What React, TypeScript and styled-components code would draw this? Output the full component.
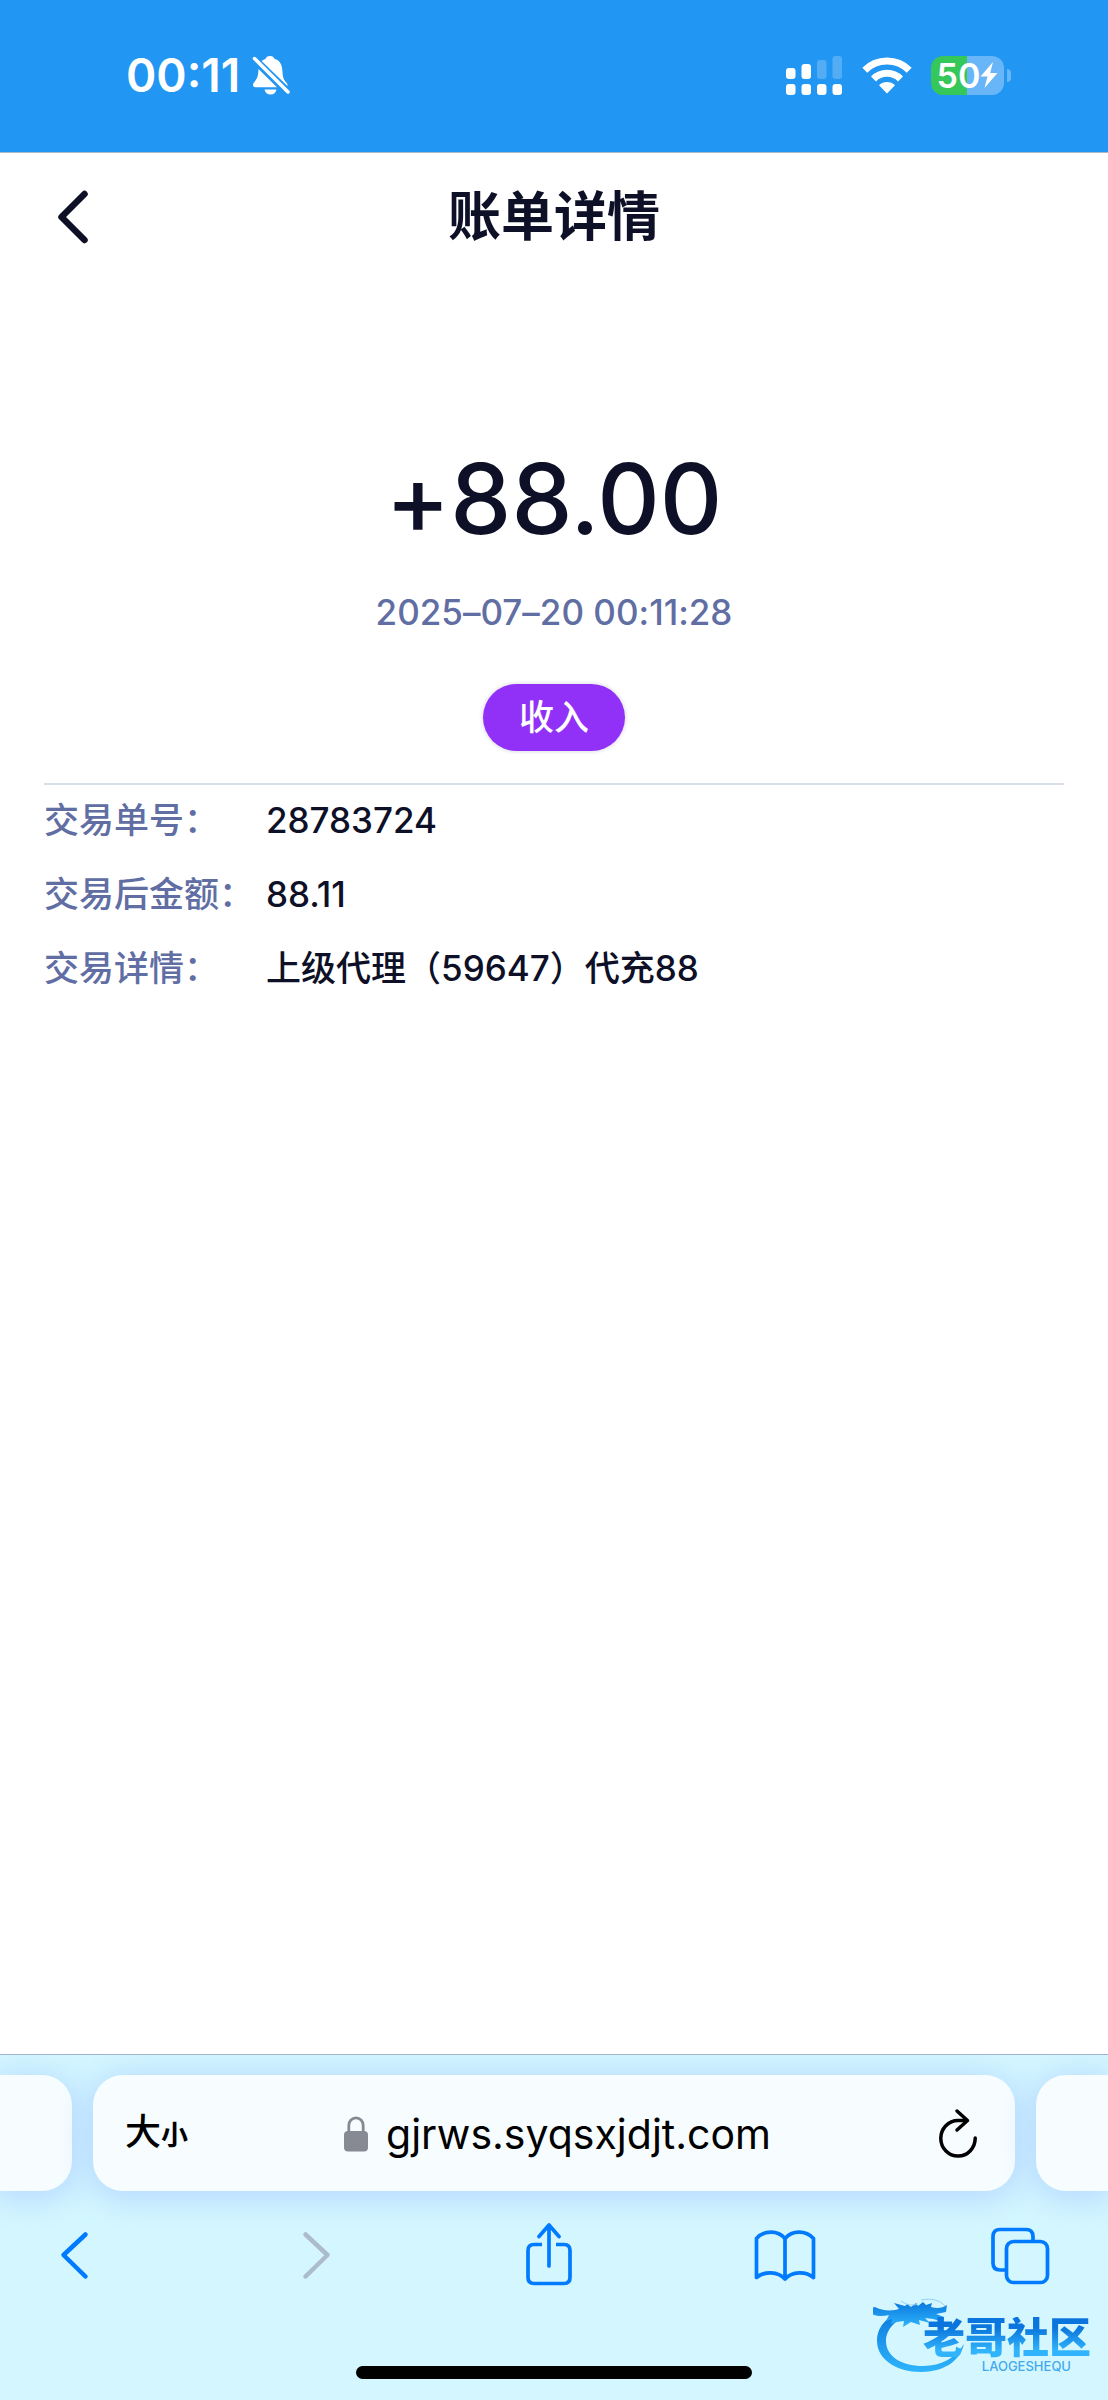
import React from "react";
import styled, { createGlobalStyle } from "styled-components";

const GlobalStyle = createGlobalStyle`
  *, *::before, *::after { box-sizing: border-box; }
  body {
    margin: 0;
    background: #ffffff;
    color: #0d1027;
    font-family: Inter, "Noto Sans CJK SC", sans-serif;
  }
  button {
    padding: 0;
    border: 0;
    background: none;
    color: inherit;
    font: inherit;
    cursor: pointer;
  }
  svg { display: block; }
`;

const Page = styled.div`
  position: relative;
  display: flex;
  flex-direction: column;
  min-height: 100vh;
`;

const StatusBar = styled.div`
  display: flex;
  align-items: center;
  justify-content: space-between;
  height: 153px;
  padding: 0 97px 2px 126px;
  border-bottom: 1px solid #a9b9c9;
  background: #2296f3;
  color: #ffffff;
`;

const StatusGroup = styled.div<{ $gap: number }>`
  display: flex;
  align-items: center;
  gap: ${(p) => p.$gap}px;
`;

const Clock = styled.time`
  font-size: 46px;
  font-weight: 600;
  line-height: 56px;
`;

const Battery = styled.div`
  display: flex;
  align-items: center;
  gap: 3px;
`;

const BatteryBody = styled.div`
  display: flex;
  align-items: center;
  justify-content: center;
  width: 73px;
  height: 39px;
  border-radius: 12px;
  background: linear-gradient(90deg, #35c759 50%, #68b6f7 50%);
  font-size: 34px;
  font-weight: 600;
  line-height: 39px;
`;

const BatteryTip = styled.span`
  width: 4px;
  height: 13px;
  border-radius: 0 6px 6px 0;
  background: #68b6f7;
`;

const Header = styled.header`
  display: grid;
  grid-template-columns: 1fr auto 1fr;
  align-items: center;
  height: 128px;
  padding: 0 44px;
`;

const BackButton = styled.button`
  justify-self: start;
  display: flex;
  align-items: center;
  justify-content: center;
  width: 58px;
  height: 80px;
`;

const Title = styled.h1`
  margin: 0;
  font-size: 53px;
  font-weight: 700;
  line-height: 64px;
`;

const Content = styled.main`
  flex: 1;
  padding: 168px 44px 48px;
  font-feature-settings: "calt" 0;
`;

const Summary = styled.section`
  display: flex;
  flex-direction: column;
  align-items: center;
  padding-bottom: 32px;
  border-bottom: 2px solid #d9dfea;
`;

const Amount = styled.p`
  margin: 0 0 39px;
  font-size: 97px;
  font-weight: 500;
  line-height: 100px;
`;

const Timestamp = styled.time`
  margin-bottom: 48px;
  color: #616ea3;
  font-size: 35px;
  font-weight: 500;
  line-height: 48px;
`;

const Badge = styled.span`
  height: 67px;
  padding: 0 36px;
  border-radius: 34px;
  background: #9131f7;
  box-shadow: 0 0 3px 2px #e9ebf0;
  color: #ffffff;
  font-size: 35px;
  font-weight: 500;
  line-height: 66px;
`;

const Details = styled.dl`
  display: grid;
  grid-template-columns: 222px 1fr;
  row-gap: 26px;
  margin: 11px 0 0;
  font-size: 35px;
  font-weight: 500;
  line-height: 48px;
`;

const Label = styled.dt`
  color: #616ea3;
  white-space: nowrap;
`;

const Value = styled.dd`
  margin: 0;
`;

const BrowserBar = styled.footer`
  display: flex;
  flex-direction: column;
  padding: 20px 0 21px;
  border-top: 1px solid #9fb4c8;
  background: #d4f7ff;
  overflow: hidden;
`;

const TabStrip = styled.div`
  display: flex;
  gap: 21px;
  height: 116px;
`;

const TabCard = styled.div`
  background: #f7fdff;
  box-shadow: 0 4px 32px 4px rgba(165, 200, 255, 0.65);
`;

const PreviousTab = styled(TabCard)`
  width: 72px;
  border-radius: 0 30px 30px 0;
`;

const NextTab = styled(TabCard)`
  width: 72px;
  border-radius: 30px 0 0 30px;
`;

const CurrentTab = styled(TabCard)`
  flex: 1;
  display: grid;
  grid-template-columns: 1fr auto 1fr;
  align-items: center;
  padding: 2px 38px 0 32px;
  border-radius: 30px;
  color: #000000;
`;

const TextSizeButton = styled.button`
  justify-self: start;
  font-size: 36px;
  font-weight: 500;
  line-height: 48px;

  small {
    font-size: 27px;
    font-weight: 700;
  }
`;

const AddressButton = styled.button`
  display: flex;
  align-items: center;
  gap: 18px;
  padding-left: 13px;
  font-size: 41px;
  line-height: 48px;
`;

const ReloadButton = styled.button`
  justify-self: end;
`;

const Toolbar = styled.nav`
  display: flex;
  justify-content: space-between;
  margin: 32px 58px 79px 44px;
`;

const ToolButton = styled.button`
  width: 60px;
  height: 64px;
  color: #007aff;

  &:disabled {
    color: #adbccd;
  }
`;

const HomeIndicator = styled.div`
  align-self: center;
  width: 396px;
  height: 13px;
  border-radius: 7px;
  background: #000000;
`;

const Watermark = styled.div`
  position: absolute;
  right: 17px;
  bottom: 25px;
  display: flex;
  align-items: flex-end;
  pointer-events: none;
`;

const WatermarkText = styled.div`
  display: flex;
  flex-direction: column;
  align-items: flex-end;
  margin: 0 0 2px -44px;
`;

const WatermarkName = styled.span`
  background: linear-gradient(180deg, #0a75dc 25%, #31b4fb 80%);
  background-clip: text;
  -webkit-background-clip: text;
  color: transparent;
  font-size: 42px;
  font-weight: 900;
  line-height: 42px;
`;

const WatermarkLatin = styled.span`
  margin-right: 20px;
  color: #42a9ee;
  font-size: 13px;
  font-weight: 500;
  line-height: 14px;
`;

const stroke = {
  fill: "none",
  stroke: "currentColor",
  strokeLinecap: "round" as const,
  strokeLinejoin: "round" as const,
};

const MutedBellIcon = () => (
  <svg width="38" height="40" viewBox="0 0 38 40" fill="#ffffff" aria-label="静音">
    <path d="M18 1c-2.500 0-4 1.300-4.500 3-2 .6-3.600 1.600-4.800 3L34 32c1.600-.3 2-2 1-3.400-2.800-3.500-4.300-5.500-4.500-11.600C30.200 9.500 28 5.300 22.600 4 22 2.200 20.500 1 18 1z" />
    <path d="M6.500 14c-.3 8-1.500 10-4.500 13.600-2 2.300-1 4.600 1.400 4.600H25z" />
    <path d="M12.500 34.500h12c-.5 3-2.900 5-6 5s-5.500-2-6-5z" />
    <path d="M2 3.500l34 33" stroke="#2296f3" strokeWidth="7" />
    <path d="M2.500 3.500l33.500 33.500" stroke="#ffffff" strokeWidth="3.500" strokeLinecap="round" />
  </svg>
);

const SignalIcon = () => (
  <svg width="57" height="39" viewBox="0 0 57 39" fill="#ffffff" aria-label="信号">
    <rect x="0" y="12" width="9.500" height="11" rx="3" />
    <rect x="15.500" y="8" width="9.500" height="15" rx="3" />
    <rect x="31" y="4" width="9.500" height="19" rx="3" opacity="0.220" />
    <rect x="46.500" y="0" width="9.500" height="23" rx="3" opacity="0.220" />
    <rect x="0" y="28" width="9.500" height="11" rx="3" />
    <rect x="15.500" y="28" width="9.500" height="11" rx="3" />
    <rect x="31" y="28" width="9.500" height="11" rx="3" />
    <rect x="46.500" y="28" width="9.500" height="11" rx="3" />
  </svg>
);

const WifiIcon = () => (
  <svg width="50" height="37" viewBox="0 0 50 37" aria-label="无线网络">
    <path d="M2.800 13.200a31.500 31.500 0 0 1 44.400 0" fill="none" stroke="#ffffff" strokeWidth="7" />
    <path d="M11.500 22a19 19 0 0 1 27 0" fill="none" stroke="#ffffff" strokeWidth="7" />
    <path d="M25 36.500l-8-8.200c4.500-4.300 11.500-4.300 16 0z" fill="#ffffff" />
  </svg>
);

const BoltIcon = () => (
  <svg width="18" height="26" viewBox="0 0 18 26" fill="#ffffff" aria-hidden="true">
    <path d="M13 0L0.500 14.500h7L4.500 26 17.500 11h-7.300z" />
  </svg>
);

const PageBackIcon = () => (
  <svg width="32" height="56" viewBox="0 0 32 56" aria-hidden="true">
    <path d="M27.500 5L4.500 28l23 23" {...stroke} strokeWidth="6.500" />
  </svg>
);

const LockIcon = () => (
  <svg width="24" height="36" viewBox="0 0 24 36" fill="#888a93" aria-hidden="true">
    <rect x="0" y="15" width="24" height="20.500" rx="4" />
    <path d="M4.800 17V9.500a7.200 7.700 0 0 1 14.400 0V17" fill="none" stroke="#888a93" strokeWidth="2.800" />
  </svg>
);

const ReloadIcon = () => (
  <svg width="38" height="52" viewBox="0 0 38 52" aria-hidden="true">
    <path d="M27 12.500H19A17.200 17.800 0 1 0 36.200 30" {...stroke} strokeWidth="3.500" />
    <path d="M18 3l10.500 9.500L18 22" {...stroke} strokeWidth="3.500" />
  </svg>
);

const BackIcon = () => (
  <svg width="60" height="64" viewBox="0 0 60 64" aria-hidden="true">
    <path d="M41.500 11.500L19.500 32l22 21.500" {...stroke} strokeWidth="4.500" />
  </svg>
);

const ForwardIcon = () => (
  <svg width="60" height="64" viewBox="0 0 60 64" aria-hidden="true">
    <path d="M24.500 11.500L46.500 32l-22 21.500" {...stroke} strokeWidth="4.500" />
  </svg>
);

const ShareIcon = () => (
  <svg width="60" height="64" viewBox="0 0 60 64" aria-hidden="true">
    <path d="M25 21.500h-8q-6 0-6 6v27q0 6 6 6h30q6 0 6-6v-27q0-6-6-6h-8" {...stroke} strokeLinecap="butt" strokeWidth="3.700" />
    <path d="M32 43V3M22 13.500L32 2l10 11.500" {...stroke} strokeWidth="3.700" />
  </svg>
);

const BookIcon = () => (
  <svg width="62" height="64" viewBox="0 0 62 64" aria-hidden="true">
    <path
      d="M31 15.500C24 7 10 7 2.500 15.500V54.500C10 48 24 48 31 56c7-8 21-8 28.500-1.500V15.500C52 7 38 7 31 15.500zM31 15.500V56"
      {...stroke}
      strokeWidth="3.700"
    />
  </svg>
);

const TabsIcon = () => (
  <svg width="60" height="64" viewBox="0 0 60 64" aria-hidden="true">
    <path d="M43 17.500v-4q0-7-7-7H10q-7 0-7 7v26.500q0 7 7 7h6" {...stroke} strokeLinecap="butt" strokeWidth="3.700" />
    <rect x="16.500" y="18.500" width="41" height="41" rx="7" {...stroke} strokeWidth="3.700" />
  </svg>
);

const DragonMark = () => (
  <svg width="94" height="78" viewBox="0 0 94 78" aria-hidden="true">
    <defs>
      <linearGradient id="dragon" x1="0" y1="0" x2="0" y2="1">
        <stop offset="0" stopColor="#0a79de" />
        <stop offset="1" stopColor="#2fb4fb" />
      </linearGradient>
    </defs>
    <g fill="url(#dragon)">
      <path d="M30 14C12 20 4 31 4 44c0 18 19 31 44 31 23 0 39-11 43-28-8 13-22 22-41 22-22 0-37-10-37-25 0-12 10-22 25-26z" />
      <path d="M2 10c6 3 12 4 20 3l4-1-5-6 11 3 2-2 4 3 5-4 2 3 5-4 3 3 6-2-1 4c6 2 12 1 16-2l-1 7-10 2 8 3-1 5-10-3-8-1 5 5-11-3 1 5-9-3-8 5 1-6-7 1-6 2 1-5-6 2 3-6c-9 2-17 1-24-6z" />
    </g>
    <path d="M28 4c6 4 11 5 17 3M48 3c10-2 19 0 24 6" fill="none" stroke="#8fd2f7" strokeWidth="1" />
  </svg>
);

const details = [
  { label: "交易单号：", value: "28783724" },
  { label: "交易后金额：", value: "88.11" },
  { label: "交易详情：", value: "上级代理（59647）代充88" },
];

export default function App() {
  return (
    <Page>
      <GlobalStyle />
      <StatusBar>
        <StatusGroup $gap={12}>
          <Clock>00:11</Clock>
          <MutedBellIcon />
        </StatusGroup>
        <StatusGroup $gap={19}>
          <SignalIcon />
          <WifiIcon />
          <Battery>
            <BatteryBody>
              50
              <BoltIcon />
            </BatteryBody>
            <BatteryTip />
          </Battery>
        </StatusGroup>
      </StatusBar>

      <Header>
        <BackButton type="button" aria-label="返回">
          <PageBackIcon />
        </BackButton>
        <Title>账单详情</Title>
      </Header>

      <Content>
        <Summary>
          <Amount>+88.00</Amount>
          <Timestamp dateTime="2025-07-20T00:11:28">2025–07–20 00:11:28</Timestamp>
          <Badge>收入</Badge>
        </Summary>
        <Details>
          {details.map((item) => (
            <React.Fragment key={item.label}>
              <Label>{item.label}</Label>
              <Value>{item.value}</Value>
            </React.Fragment>
          ))}
        </Details>
      </Content>

      <BrowserBar>
        <TabStrip>
          <PreviousTab />
          <CurrentTab>
            <TextSizeButton type="button">
              大<small>小</small>
            </TextSizeButton>
            <AddressButton type="button">
              <LockIcon />
              gjrws.syqsxjdjt.com
            </AddressButton>
            <ReloadButton type="button" aria-label="重新载入">
              <ReloadIcon />
            </ReloadButton>
          </CurrentTab>
          <NextTab />
        </TabStrip>
        <Toolbar>
          <ToolButton type="button" aria-label="后退">
            <BackIcon />
          </ToolButton>
          <ToolButton type="button" aria-label="前进" disabled>
            <ForwardIcon />
          </ToolButton>
          <ToolButton type="button" aria-label="分享">
            <ShareIcon />
          </ToolButton>
          <ToolButton type="button" aria-label="书签">
            <BookIcon />
          </ToolButton>
          <ToolButton type="button" aria-label="标签页">
            <TabsIcon />
          </ToolButton>
        </Toolbar>
        <HomeIndicator />
      </BrowserBar>

      <Watermark>
        <DragonMark />
        <WatermarkText>
          <WatermarkName>老哥社区</WatermarkName>
          <WatermarkLatin>LAOGESHEQU</WatermarkLatin>
        </WatermarkText>
      </Watermark>
    </Page>
  );
}
